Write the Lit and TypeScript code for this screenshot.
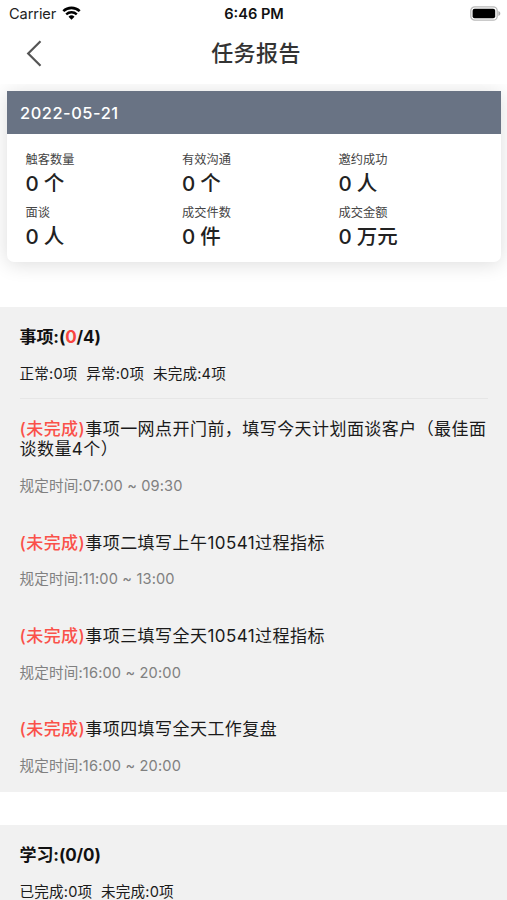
import { LitElement, html, css, nothing } from "lit";
import { customElement, property } from "lit/decorators.js";

interface Stat { label: string; value: string; unit: string; }
interface Task { title: string; time: string; }

const STATS: Stat[] = [
  { label: "触客数量", value: "0", unit: "个" },
  { label: "有效沟通", value: "0", unit: "个" },
  { label: "邀约成功", value: "0", unit: "人" },
  { label: "面谈", value: "0", unit: "人" },
  { label: "成交件数", value: "0", unit: "件" },
  { label: "成交金额", value: "0", unit: "万元" },
];

const TASKS: Task[] = [
  { title: "事项一网点开门前，填写今天计划面谈客户（最佳面谈数量4个）", time: "07:00 ~ 09:30" },
  { title: "事项二填写上午10541过程指标", time: "11:00 ~ 13:00" },
  { title: "事项三填写全天10541过程指标", time: "16:00 ~ 20:00" },
  { title: "事项四填写全天工作复盘", time: "16:00 ~ 20:00" },
];

@customElement("status-bar")
class StatusBar extends LitElement {
  static styles = css`
    :host {
      display: grid;
      grid-template-columns: 1fr auto 1fr;
      align-items: center;
      height: 27px;
      padding: 0 6px 0 9px;
      font-size: 14.6px;
      color: #111;
    }
    .left { display: flex; align-items: center; gap: 6px; }
    .carrier { letter-spacing: -0.1px; color: #222; }
    .time { font-weight: 600; letter-spacing: 0; margin-right: 2px; }
    .right { display: flex; justify-content: flex-end; }
    svg { display: block; }
    .wifi { margin-top: -2px; }
  `;
  render() {
    return html`
      <div class="left">
        <span class="carrier">Carrier</span>
        <svg class="wifi" width="19" height="14" viewBox="0 0 19 14">
          <path d="M1.3 5.1a12 12 0 0 1 16.4 0" fill="none" stroke="#000" stroke-width="2.6"/>
          <path d="M4.2 8.4a7.8 7.8 0 0 1 10.6 0" fill="none" stroke="#000" stroke-width="2.4"/>
          <path d="M6.5 10.7a4.4 4.4 0 0 1 6 0L9.5 13.7z" fill="#000"/>
        </svg>
      </div>
      <span class="time">6:46 PM</span>
      <div class="right">
        <svg width="31" height="15" viewBox="0 0 31 15">
          <rect x="0.8" y="0.8" width="26.4" height="13.4" rx="4" fill="#fff" stroke="#b9b9b9" stroke-width="1.3"/>
          <rect x="2.6" y="2.8" width="22.6" height="9.4" rx="2" fill="#000"/>
          <path d="M28.4 5v5c1.2-.5 1.9-1.4 1.9-2.5S29.6 5.500 28.4 5z" fill="#aaa"/>
        </svg>
      </div>`;
  }
}

@customElement("nav-header")
class NavHeader extends LitElement {
  @property() heading = "";
  static styles = css`
    :host {
      display: grid;
      grid-template-columns: 42px 1fr 42px;
      align-items: center;
      height: 53px;
      box-sizing: border-box;
    }
    .back { display: block; justify-self: end; }
    h1 {
      margin: -2px 0 0;
      text-align: center;
      font-size: 22px;
      line-height: 30px;
      font-weight: 500;
      letter-spacing: 0.4px;
      padding-left: 5px;
      color: #333;
    }
  `;
  render() {
    return html`
      <svg class="back" width="16" height="28" viewBox="0 0 16 28">
        <path d="M14.500 1.300L2.200 13.500l12.300 12.200" fill="none" stroke="#555" stroke-width="2.200"/>
      </svg>
      <h1>${this.heading}</h1>`;
  }
}

@customElement("summary-card")
class SummaryCard extends LitElement {
  @property() date = "";
  @property({ attribute: false }) stats: Stat[] = [];
  static styles = css`
    :host { display: block; overflow: hidden; padding: 7.400px 6px 30px 7px; margin-top: 4px; }
    .card { border-radius: 0 0 7px 7px; background: #fff; box-shadow: 0 2px 20px rgba(0, 0, 0, 0.14); }
    .date {
      height: 42.300px;
      line-height: 44px;
      padding-left: 13px;
      background: #697384;
      color: #fff;
      font-size: 16.4px;
      font-weight: 500;
      letter-spacing: 0.55px;
    }
    .grid {
      display: grid;
      grid-template-columns: 156.500px 156.500px 1fr;
      row-gap: 1px;
      padding: 17px 0 6.300px 18.500px;
    }
    .label { font-size: 12.200px; line-height: 17px; letter-spacing: 0.05px; color: #444; }
    .value { display: flex; gap: 5px; font-size: 20.500px; line-height: 32px; height: 34px; font-weight: 500; color: #222; }
    .grid > div { height: 52px; }
  `;
  render() {
    return html`
      <div class="card">
        <div class="date">${this.date}</div>
        <div class="grid">
          ${this.stats.map((s) => html`
            <div>
              <div class="label">${s.label}</div>
              <div class="value"><span>${s.value}</span><span>${s.unit}</span></div>
            </div>`)}
        </div>
      </div>`;
  }
}

@customElement("report-section")
class ReportSection extends LitElement {
  @property() name = "";
  @property({ type: Number }) done = 0;
  @property({ type: Number }) total = 0;
  @property({ attribute: false }) counts: string[] = [];
  @property({ attribute: false }) tasks: Task[] = [];
  static styles = css`
    :host { display: block; background: #f1f1f1; padding: 19.500px 19px 17px 19.500px; color: #1a1a1a; }
    h2 { margin: 0; font-size: 17px; line-height: 21px; font-weight: 700; letter-spacing: -0.1px; color: #111; }
    .red { color: #f8453f; }
    .counts { display: flex; gap: 8.600px; margin-top: 16.500px; font-size: 14.600px; line-height: 20px; letter-spacing: 0.18px; white-space: nowrap; }
    .list { display: flex; flex-direction: column; gap: 37.300px; margin-top: 14px; padding-top: 19.500px; border-top: 1px solid #e6e6e6; }
    .title { font-size: 17px; line-height: 20.500px; letter-spacing: 0.44px; word-break: break-all; }
    .flag { color: #fa514a; font-weight: 500; letter-spacing: 0.45px; }
    .time { margin-top: 18.300px; font-size: 14.600px; line-height: 17.300px; letter-spacing: 0.15px; color: #808080; }
  `;
  render() {
    return html`
      <h2>${this.name}:(${this.total > 0 ? html`<span class="red">${this.done}</span>` : this.done}/${this.total})</h2>
      <div class="counts">${this.counts.map((c) => html`<span>${c}</span>`)}</div>
      ${this.tasks.length ? html`
        <div class="list">
          ${this.tasks.map((t) => html`
            <div>
              <div class="title"><span class="flag">(未完成)</span>${t.title}</div>
              <div class="time">规定时间:${t.time}</div>
            </div>`)}
        </div>` : nothing}`;
  }
}

@customElement("app-root")
class AppRoot extends LitElement {
  static styles = css`
    :host {
      display: block;
      height: 900px;
      overflow: hidden;
      background: #fff;
      font-family: Inter, "Noto Sans CJK SC", sans-serif;
    }
    .sections { display: flex; flex-direction: column; gap: 33px; margin-top: 15.200px; }
  `;
  render() {
    return html`
      <status-bar></status-bar>
      <nav-header heading="任务报告"></nav-header>
      <summary-card date="2022-05-21" .stats=${STATS}></summary-card>
      <div class="sections">
        <report-section name="事项" .done=${0} .total=${4}
          .counts=${["正常:0项", "异常:0项", "未完成:4项"]} .tasks=${TASKS}></report-section>
        <report-section name="学习" .done=${0} .total=${0}
          .counts=${["已完成:0项", "未完成:0项"]}></report-section>
      </div>`;
  }
}
